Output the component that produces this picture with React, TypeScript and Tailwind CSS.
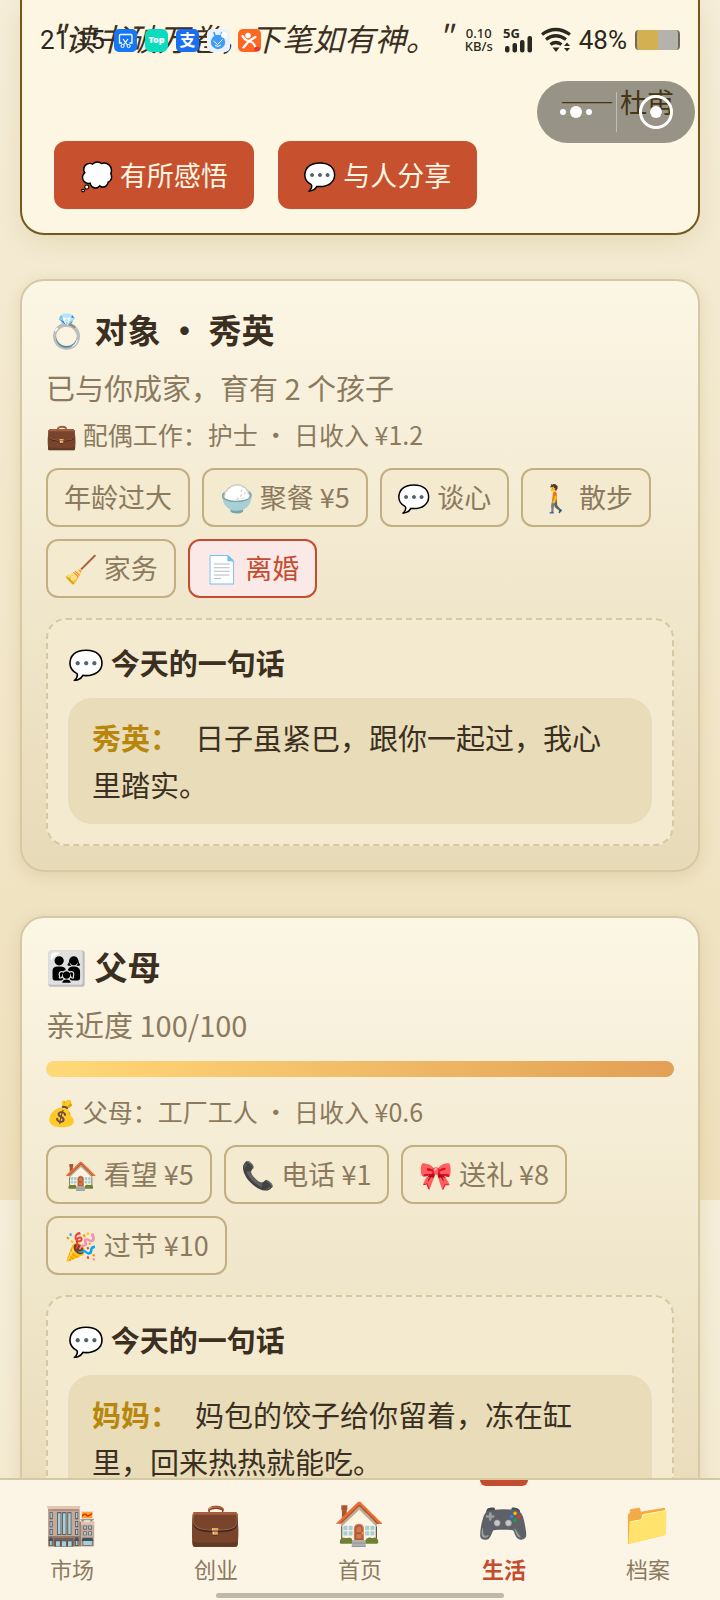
import React from "react";

interface Action {
  label: string;
  danger?: boolean;
}

interface Relation {
  id: string;
  title: string;
  status: string;
  closeness?: number;
  job: string;
  actions: Action[];
  speaker: string;
  message: string;
}

const relations: Relation[] = [
  {
    id: "spouse",
    title: "💍 对象 ・ 秀英",
    status: "已与你成家，育有 2 个孩子",
    job: "💼 配偶工作：护士 ・ 日收入 ¥1.2",
    actions: [
      { label: "年龄过大" },
      { label: "🍚 聚餐 ¥5" },
      { label: "💬 谈心" },
      { label: "🚶 散步" },
      { label: "🧹 家务" },
      { label: "📄 离婚", danger: true },
    ],
    speaker: "秀英：",
    message: "日子虽紧巴，跟你一起过，我心里踏实。",
  },
  {
    id: "parents",
    title: "👨‍👩‍👧 父母",
    status: "亲近度 100/100",
    closeness: 100,
    job: "💰 父母：工厂工人 ・ 日收入 ¥0.6",
    actions: [
      { label: "🏠 看望 ¥5" },
      { label: "📞 电话 ¥1" },
      { label: "🎀 送礼 ¥8" },
      { label: "🎉 过节 ¥10" },
    ],
    speaker: "妈妈：",
    message: "妈包的饺子给你留着，冻在缸里，回来热热就能吃。",
  },
];

const tabs = [
  { icon: "🏬", label: "市场" },
  { icon: "💼", label: "创业" },
  { icon: "🏠", label: "首页" },
  { icon: "🎮", label: "生活", active: true },
  { icon: "📁", label: "档案" },
];

const AppBadges: React.FC = () => (
  <div className="flex gap-2">
    <svg width="23" height="23" viewBox="0 0 23 23">
      <rect width="23" height="23" rx="5" fill="#1677f5" />
      <path d="M8 14H5.500V6.500q0-1 1-1H17q1 0 1 1V14h-2.500" fill="none" stroke="#fff" strokeWidth="1.300" />
      <path d="m9 10 4.500 6M14 10l-4.500 6" stroke="#fff" strokeWidth="1.200" />
      <circle cx="8.600" cy="17" r="1.600" fill="none" stroke="#fff" />
      <circle cx="14.600" cy="17" r="1.600" fill="none" stroke="#fff" />
    </svg>
    <svg width="23" height="23" viewBox="0 0 23 23">
      <rect width="23" height="23" rx="6" fill="#0bdcc0" />
      <text x="11.500" y="14" textAnchor="middle" fontSize="9" fontWeight="900" fill="#fff" fontFamily="Noto Sans">
        Top
      </text>
    </svg>
    <svg width="23" height="23" viewBox="0 0 23 23">
      <rect width="23" height="23" rx="5" fill="#1a6ff0" />
      <text x="11.500" y="17" textAnchor="middle" fontSize="16" fontWeight="700" fill="#fff" fontFamily="Noto Sans CJK SC">
        支
      </text>
    </svg>
    <svg width="23" height="23" viewBox="0 0 23 23">
      <rect width="23" height="23" rx="5" fill="#eaf3fd" />
      <path d="M8.500 8 7 3.500M14 7.500l.5-4" stroke="#3f9cf2" strokeWidth="1.600" strokeLinecap="round" />
      <circle cx="11" cy="13" r="7.200" fill="#3f9cf2" />
      <circle cx="17" cy="6" r="3" fill="#fff" />
      <path d="m6.500 12 4 3.500 5-5M8 16.500q3 2 6-.5" fill="none" stroke="#fff" strokeWidth="1" />
    </svg>
    <svg width="23" height="23" viewBox="0 0 23 23">
      <rect width="23" height="23" rx="5" fill="#fd6721" />
      <circle cx="10" cy="6.500" r="2.800" fill="#fff" />
      <path d="M4.500 7q2.500 4.500 6.500 5l6.500-4M11 12l-5.500 6.500M11 12q5 1.500 6 5.500" fill="none" stroke="#fff" strokeWidth="2.200" strokeLinecap="round" />
      <rect x="16" y="18" width="6" height="4" rx="2" fill="#e5353f" />
    </svg>
  </div>
);

const StatusBar: React.FC = () => (
  <div className="pointer-events-none absolute inset-x-0 top-6 flex h-8 items-center px-10 font-['Roboto'] text-[#2b2820]">
    <span className="w-[74px] text-[26px]">21:15</span>
    <AppBadges />
    <div className="ml-auto flex items-center gap-2">
      <div className="text-center font-['Noto_Sans'] text-[13px] leading-[13px] font-medium">
        <div>0.10</div>
        <div>KB/s</div>
      </div>
      <svg width="32" height="26" viewBox="0 0 32 26" fill="#2b2820" className="overflow-visible">
        <text x="2" y="11" fontSize="13" fontWeight="700" fontFamily="Noto Sans">5G</text>
        <rect x="4" y="19" width="4.500" height="6.500" rx="2" />
        <rect x="11.500" y="16" width="4.500" height="9.500" rx="2" />
        <rect x="19" y="13" width="4.500" height="12.500" rx="2" />
        <rect x="26.500" y="9" width="4.500" height="16.500" rx="2" />
      </svg>
      <svg width="30" height="26" viewBox="0 0 30 26" fill="none" stroke="#2b2820" strokeWidth="3.200">
        <path d="M1 7.500q13.500-10 28 0M5 12.500q9.500-7.500 20 0M9.500 17.500q5-4 11 0" />
        <path d="M11.500 20.500h7L15 25zM23 19l3-3.500 3 3.500zM23 21l3 3.500 3-3.500z" fill="#2b2820" stroke="none" />
      </svg>
      <span className="text-[26px]">48%</span>
      <span className="h-5 w-[45px] rounded-sm border-x-2 border-[#6d6a5f] bg-linear-to-r from-[#d3b052] from-52% to-[#b3b3ac] to-52%" />
    </div>
  </div>
);

const Capsule: React.FC = () => (
  <div className="absolute right-[25px] top-[81px] flex h-[62px] w-[158px] items-center rounded-full bg-black/40">
    <button aria-label="更多" className="flex flex-1 items-center justify-center gap-1">
      <span className="size-1.5 rounded-full bg-white" />
      <span className="size-3 rounded-full bg-white" />
      <span className="size-1.5 rounded-full bg-white" />
    </button>
    <span className="h-10 w-px bg-white/40" />
    <button aria-label="关闭" className="flex flex-1 justify-center">
      <span className="flex size-[34px] items-center justify-center rounded-full border-3 border-white">
        <span className="size-3 rounded-full bg-white" />
      </span>
    </button>
  </div>
);

const QuoteCard: React.FC = () => (
  <section className="rounded-b-[24px] border-2 border-t-0 border-[#73591b] bg-[#fdf6e2] px-6 pb-6 shadow-[0_8px_24px_rgba(139,105,20,0.12)]">
    <blockquote className="px-1 pt-3.5 text-[31px] leading-[48px] italic">"读书破万卷，下笔如有神。"</blockquote>
    <p className="mt-[18px] text-right text-[27px] leading-[44px] text-[#73591b]">—— 杜甫</p>
    <div className="mt-[17px] flex gap-6 px-2">
      <button className="h-[68px] rounded-xl bg-[#c7502f] px-[26px] text-[27px] text-[#fdf6e2]">💭 有所感悟</button>
      <button className="h-[68px] rounded-xl bg-[#c7502f] px-[26px] text-[27px] text-[#fdf6e2]">💬 与人分享</button>
    </div>
  </section>
);

const RelationCard: React.FC<{ data: Relation }> = ({ data }) => (
  <section className="rounded-[24px] border-2 border-[#d6c8a2] bg-linear-to-b from-[#fcf6e5] to-[#e7dab7] p-6 shadow-[0_4px_16px_rgba(139,105,20,0.15)]">
    <h2 className="text-[33px] leading-[48px] font-bold">{data.title}</h2>
    <p className="mt-[11px] text-[29px] leading-[46px] text-[#8b7a5e]">{data.status}</p>
    {data.closeness !== undefined && (
      <div className="my-3.5 h-4 overflow-hidden rounded-full bg-[#e7dab7]">
        <div
          className="h-full rounded-full bg-linear-to-r from-[#ffd978] to-[#e2a056]"
          style={{ width: `${data.closeness}%` }}
        />
      </div>
    )}
    <p className="mt-1 text-[25px] leading-[40px] text-[#8b7a5e]">{data.job}</p>
    <div className="mt-3.5 flex flex-wrap gap-3">
      {data.actions.map((action) => (
        <button
          key={action.label}
          className={
            action.danger
              ? "h-[59px] rounded-xl border-2 border-[#c44d2f] bg-[#fbe9e7] px-4 text-[27px] text-[#c44d2f]"
              : "h-[59px] rounded-xl border-2 border-[#c3b082] bg-[#f4ead0] px-4 text-[27px] text-[#8b7a5e]"
          }>
          {action.label}
        </button>
      ))}
    </div>
    <div className="mt-5 rounded-[20px] border-2 border-dashed border-[#d6c8a2] bg-[#f4ead0] p-5">
      <h3 className="text-[29px] leading-[44px] font-bold">💬 今天的一句话</h3>
      <p className="mt-3.5 rounded-[24px] bg-[#e8dcb9] px-6 py-4 text-[29px] leading-[47px]">
        <strong className="mr-4 text-[#b8860b]">{data.speaker}</strong>
        {data.message}
      </p>
    </div>
  </section>
);

const TabBar: React.FC = () => (
  <nav className="relative flex border-t-2 border-[#d6c8a2] bg-[#fcf5e6] pb-3">
    {tabs.map((tab) => (
      <a key={tab.label} href="#" className="relative flex flex-1 flex-col items-center pt-3">
        {tab.active && <span className="absolute top-0 h-1.5 w-12 rounded-b-md bg-[#c44d2f]" />}
        <span className="text-[42px] leading-[56px]">{tab.icon}</span>
        <span
          className={
            tab.active
              ? "text-[22px] leading-[40px] font-bold text-[#c44d2f]"
              : "text-[22px] leading-[40px] text-[#8b7a5e]"
          }>
          {tab.label}
        </span>
      </a>
    ))}
    <span className="absolute bottom-0.5 left-1/2 h-[5px] w-2/5 -translate-x-1/2 rounded-full bg-[#bdb8a8]" />
  </nav>
);

const App: React.FC = () => {
  return (
    <div
      lang="zh-CN"
      className="relative flex h-screen flex-col bg-linear-to-b from-[#f5edd8] to-[#eee0bb] bg-[length:100%_1200px] font-['Noto_Sans_CJK_SC','Noto_Color_Emoji',sans-serif] text-[#3b2f22]">
      <main className="flex min-h-0 flex-1 flex-col gap-11 overflow-y-auto px-5 [scrollbar-width:none] *:shrink-0">
        <QuoteCard />
        {relations.map((relation) => (
          <RelationCard key={relation.id} data={relation} />
        ))}
      </main>
      <TabBar />
      <StatusBar />
      <Capsule />
    </div>
  );
};

export default App;
